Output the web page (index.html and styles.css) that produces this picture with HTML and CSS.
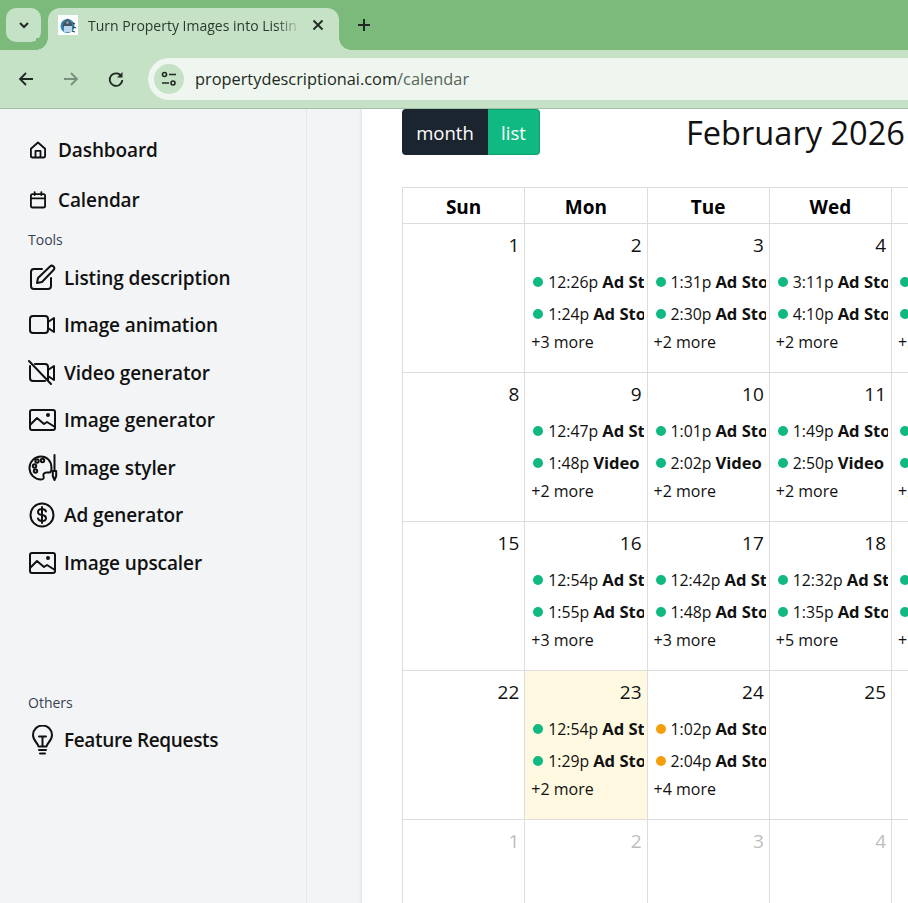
FILE: index.html
```html
<!DOCTYPE html>
<html lang="en">
<head>
<meta charset="utf-8">
<title>Calendar</title>
<link rel="stylesheet" href="styles.css">
</head>
<body>
<header class="chrome">
  <div class="tabstrip">
    <button class="tabmenu"><svg width="14" height="14" viewBox="0 0 14 14"><path d="M3 5l4 4 4-4" fill="none" stroke="#1f2a22" stroke-width="2"/></svg></button>
    <div class="tab">
      <svg class="favicon" width="20" height="20" viewBox="0 0 20 20"><rect width="20" height="20" fill="#fff"/><circle cx="9.500" cy="11" r="7" fill="#2f83ad"/><path d="M5 9l4.500-5.500L14 9v3H5z" fill="#46505e"/><rect x="6" y="11" width="8" height="6" fill="#b9d7ea"/><circle cx="9.500" cy="7.500" r="1.500" fill="#8a97a5"/><path d="M15 8l2 1M15 12l3 1M14 16l3 1" stroke="#27384a" stroke-width="1.200"/></svg>
      <span class="tabtitle">Turn Property Images into Listin</span>
      <svg class="tabx" width="12" height="12" viewBox="0 0 12 12"><path d="M1.500 1.500l9 9M10.500 1.500l-9 9" stroke="#1f2a22" stroke-width="1.800"/></svg>
    </div>
    <svg class="newtab" width="14" height="14" viewBox="0 0 14 14"><path d="M7 1v12M1 7h12" stroke="#1f2a22" stroke-width="2"/></svg>
  </div>
  <div class="toolbar">
    <svg class="navicon" width="18" height="18" viewBox="0 0 18 18"><path d="M16 9H3M9 3L3 9l6 6" fill="none" stroke="#1f2a22" stroke-width="1.800"/></svg>
    <svg class="navicon" width="18" height="18" viewBox="0 0 18 18"><path d="M2 9h13M9 3l6 6-6 6" fill="none" stroke="#76907b" stroke-width="1.800"/></svg>
    <svg class="navicon" width="18" height="18" viewBox="0 0 18 18"><path d="M14.500 6.500A6.300 6.300 0 1 0 15.300 10" fill="none" stroke="#1f2a22" stroke-width="1.800"/><path d="M15.500 2v5.500H10z" fill="#1f2a22"/></svg>
    <div class="omnibox">
      <span class="sitebtn"><svg width="18" height="18" viewBox="0 0 18 18"><circle cx="4.500" cy="4.500" r="2" fill="none" stroke="#1f2a22" stroke-width="1.600"/><path d="M9 4.500h7M2 13h7" stroke="#1f2a22" stroke-width="1.600"/><circle cx="13" cy="13" r="2" fill="none" stroke="#1f2a22" stroke-width="1.600"/></svg></span>
      <span class="url">propertydescriptionai.com<span class="urlpath">/calendar</span></span>
    </div>
  </div>
</header>
<div class="page">
  <aside class="sidebar">
    <a class="nav small-ic"><svg width="20" height="20" viewBox="0 0 24 24" class="ic heavy"><path d="M3.500 10.500L12 3l8.500 7.500V19a2 2 0 0 1-2 2h-13a2 2 0 0 1-2-2zM9 21v-8h6v8"/></svg>Dashboard</a>
    <a class="nav small-ic cal"><svg width="20" height="20" viewBox="0 0 24 24" class="ic heavy"><rect x="3.500" y="5" width="17" height="16" rx="2"/><path d="M3.500 10h17M8 2.500V6M16 2.500V6"/></svg>Calendar</a>
    <div class="label tools">Tools</div>
    <a class="nav big"><svg width="28" height="28" viewBox="0 0 28 28" class="ic"><path d="M23 14v8a3 3 0 0 1-3 3H6a3 3 0 0 1-3-3V8a3 3 0 0 1 3-3h8"/><path d="M10 14L22 2.500a2.200 2.200 0 0 1 3.500 3.500L14 18l-5 1z"/></svg>Listing description</a>
    <a class="nav big"><svg width="28" height="28" viewBox="0 0 28 28" class="ic"><rect x="2" y="5" width="18" height="17" rx="3"/><path d="M20 11l6-4v14l-6-4"/></svg>Image animation</a>
    <a class="nav big"><svg width="28" height="28" viewBox="0 0 28 28" class="ic"><path d="M7 5h10a3 3 0 0 1 3 3v14M17 22H5a3 3 0 0 1-3-3V7M20 11l6-4v14l-6-4M1 2l22 23"/></svg>Video generator</a>
    <a class="nav big"><svg width="28" height="28" viewBox="0 0 28 28" class="ic"><rect x="2" y="4" width="25" height="20" rx="2"/><path d="M2 19l7-7 7 6 3-2 8 5"/><circle cx="20" cy="9" r="1"/></svg>Image generator</a>
    <a class="nav big tight"><svg width="30" height="28" viewBox="0 0 30 28" class="ic"><path d="M13 2.500A11.500 11.500 0 1 0 13 25.500c3 0 3-2 2.500-3.500s.5-3.500 3-3.500h2.500c2 0 2.500-2 2.500-4.500C23.500 7 19 2.500 13 2.500z"/><circle cx="6.500" cy="12" r="1.700"/><circle cx="9" cy="7" r="1.700"/><circle cx="14.500" cy="6.500" r="1.700"/><circle cx="7.500" cy="17" r="1.700"/><path d="M26.500 1v16M24.800 17h3.400v5l-1.700 4-1.700-4z"/></svg>Image styler</a>
    <a class="nav big"><svg width="28" height="28" viewBox="0 0 28 28" class="ic"><circle cx="14" cy="14" r="11.500"/><path d="M18 10.500c-.5-1.500-2-2.500-4-2.500-2.500 0-4 1.300-4 3s1.500 2.700 4 3 4 1.300 4 3-1.500 3-4 3c-2 0-3.500-1-4-2.500M14 6v16"/></svg>Ad generator</a>
    <a class="nav big"><svg width="28" height="28" viewBox="0 0 28 28" class="ic"><rect x="2" y="4" width="25" height="20" rx="2"/><path d="M2 19l7-7 7 6 3-2 8 5"/><circle cx="20" cy="9" r="1"/></svg>Image upscaler</a>
    <div class="label others">Others</div>
    <a class="nav big requests"><svg width="28" height="30" viewBox="0 0 28 30" class="ic"><path d="M10.500 21.500c0-3-5.500-5.500-5.500-11.500a9.500 9.500 0 0 1 19 0c0 6-5.500 8.500-5.500 11.500zM11 11.500h7M14.500 11.500v10M11 25h7M12 28.500h5"/></svg>Feature Requests</a>
  </aside>
  <div class="gutter"></div>
  <main class="content">
    <div class="cal-head">
      <div class="btns"><button class="btn month">month</button><button class="btn list">list</button></div>
      <h2 class="cal-title">February 2026</h2>
    </div>
    <div class="grid">
      <div class="dow">Sun</div><div class="dow">Mon</div><div class="dow">Tue</div><div class="dow">Wed</div><div class="dow"></div>
      <div class="cell"><div class="num">1</div></div>
      <div class="cell"><div class="num">2</div><div class="ev"><i class="dot"></i>12:26p <b>Ad Story</b></div><div class="ev"><i class="dot"></i>1:24p <b>Ad Story</b></div><div class="more">+3 more</div></div>
      <div class="cell"><div class="num">3</div><div class="ev"><i class="dot"></i>1:31p <b>Ad Story</b></div><div class="ev"><i class="dot"></i>2:30p <b>Ad Story</b></div><div class="more">+2 more</div></div>
      <div class="cell"><div class="num">4</div><div class="ev"><i class="dot"></i>3:11p <b>Ad Story</b></div><div class="ev"><i class="dot"></i>4:10p <b>Ad Story</b></div><div class="more">+2 more</div></div>
      <div class="cell"><div class="num">5</div><div class="ev"><i class="dot"></i>3:11p <b>Ad Story</b></div><div class="ev"><i class="dot"></i>4:10p <b>Ad Story</b></div><div class="more">+2 more</div></div>

      <div class="cell"><div class="num">8</div></div>
      <div class="cell"><div class="num">9</div><div class="ev"><i class="dot"></i>12:47p <b>Ad Story</b></div><div class="ev"><i class="dot"></i>1:48p <b>Video</b></div><div class="more">+2 more</div></div>
      <div class="cell"><div class="num">10</div><div class="ev"><i class="dot"></i>1:01p <b>Ad Story</b></div><div class="ev"><i class="dot"></i>2:02p <b>Video</b></div><div class="more">+2 more</div></div>
      <div class="cell"><div class="num">11</div><div class="ev"><i class="dot"></i>1:49p <b>Ad Story</b></div><div class="ev"><i class="dot"></i>2:50p <b>Video</b></div><div class="more">+2 more</div></div>
      <div class="cell"><div class="num">12</div><div class="ev"><i class="dot"></i>1:49p <b>Ad Story</b></div><div class="ev"><i class="dot"></i>2:50p <b>Video</b></div><div class="more">+2 more</div></div>

      <div class="cell"><div class="num">15</div></div>
      <div class="cell"><div class="num">16</div><div class="ev"><i class="dot"></i>12:54p <b>Ad Story</b></div><div class="ev"><i class="dot"></i>1:55p <b>Ad Story</b></div><div class="more">+3 more</div></div>
      <div class="cell"><div class="num">17</div><div class="ev"><i class="dot"></i>12:42p <b>Ad Story</b></div><div class="ev"><i class="dot"></i>1:48p <b>Ad Story</b></div><div class="more">+3 more</div></div>
      <div class="cell"><div class="num">18</div><div class="ev"><i class="dot"></i>12:32p <b>Ad Story</b></div><div class="ev"><i class="dot"></i>1:35p <b>Ad Story</b></div><div class="more">+5 more</div></div>
      <div class="cell"><div class="num">19</div><div class="ev"><i class="dot"></i>12:32p <b>Ad Story</b></div><div class="ev"><i class="dot"></i>1:35p <b>Ad Story</b></div><div class="more">+5 more</div></div>

      <div class="cell"><div class="num">22</div></div>
      <div class="cell today"><div class="num">23</div><div class="ev"><i class="dot"></i>12:54p <b>Ad Story</b></div><div class="ev"><i class="dot"></i>1:29p <b>Ad Story</b></div><div class="more">+2 more</div></div>
      <div class="cell"><div class="num">24</div><div class="ev"><i class="dot amber"></i>1:02p <b>Ad Story</b></div><div class="ev"><i class="dot amber"></i>2:04p <b>Ad Story</b></div><div class="more">+4 more</div></div>
      <div class="cell"><div class="num">25</div></div>
      <div class="cell"><div class="num">26</div></div>

      <div class="cell off"><div class="num">1</div></div>
      <div class="cell off"><div class="num">2</div></div>
      <div class="cell off"><div class="num">3</div></div>
      <div class="cell off"><div class="num">4</div></div>
      <div class="cell off"><div class="num">5</div></div>
    </div>
  </main>
</div>
</body>
</html>
```

FILE: styles.css
```css
* { box-sizing: border-box; }
html, body { margin: 0; height: 100%; overflow: hidden; }
body { font-family: "Open Sans", "Noto Sans", sans-serif; color: #111; background: #fff; }

.chrome { height: 109px; background: #c5e1c6; border-bottom: 1px solid #a3bfa5; }
.tabstrip { height: 50px; background: #7cba7c; display: flex; align-items: flex-start; padding: 8px 0 0 6px; position: relative; }
.tabmenu { width: 35px; height: 34px; border: 0; border-radius: 10px; background: #c5e1c6; display: flex; align-items: center; justify-content: center; padding: 0; }
.tab { width: 291px; height: 42px; margin-left: 7px; background: #c5e1c6; border-radius: 12px 12px 0 0; display: flex; align-items: center; padding: 0 14px 8px 10px; position: relative; }
.tab::before, .tab::after { content: ""; position: absolute; bottom: 0; width: 12px; height: 12px; background: radial-gradient(circle at 0 0, #7cba7c 11.500px, #c5e1c6 12px); }
.tab::before { left: -12px; }
.tab::after { right: -12px; transform: scaleX(-1); }
.favicon { flex: none; }
.tabtitle { font-size: 14px; color: #2b3a2e; width: 213px; margin-left: 10px; white-space: nowrap; overflow: hidden; -webkit-mask-image: linear-gradient(to right, #000 88%, transparent); mask-image: linear-gradient(to right, #000 88%, transparent); }
.tabx { margin-left: 11px; flex: none; }
.newtab { margin: 10px 0 0 18px; }

.toolbar { height: 58px; display: flex; align-items: center; padding: 0 0 1px 17px; gap: 27px; background: #c5e1c6; }
.omnibox { flex: 1; height: 42px; margin-left: -4px; background: #eff6ef; border-radius: 21px 0 0 21px; display: flex; align-items: center; padding-left: 6px; }
.sitebtn { width: 30px; height: 30px; border-radius: 50%; background: #c5e1c6; display: flex; align-items: center; justify-content: center; }
.url { margin-left: 11px; font-size: 16.350px; color: #1c2a20; }
.urlpath { color: #566459; }

.page { display: flex; height: 794px; overflow: hidden; }
.sidebar { width: 307px; flex: none; background: #f3f4f6; border-right: 1px solid #e5e7eb; padding: 28px 0 0 28px; }
.gutter { width: 55px; flex: none; background: #f3f4f6; box-shadow: inset -4px 0 3px -3px #dfe1e4; }
.nav { display: flex; align-items: center; color: #111; font-weight: 600; font-size: 19px; letter-spacing: -0.1px; white-space: nowrap; }
.small-ic { height: 26px; gap: 10px; }
.cal { margin-top: 24px; }
.big { height: 28px; margin-top: 19.500px; gap: 8px; }
.tight { gap: 6px; }
.requests { letter-spacing: -0.350px; }
.label { font-size: 14px; color: #374151; line-height: 20px; }
.tools { margin-top: 17px; margin-bottom: -6px; }
.others { margin-top: 116px; margin-bottom: -6px; }
.ic { flex: none; fill: none; stroke: #111; stroke-width: 2; stroke-linecap: round; stroke-linejoin: round; }
.heavy { stroke-width: 2.200; }

.content { flex: 1; min-width: 0; padding: 0 0 0 40px; background: #fff; overflow: hidden; }
.cal-head { display: flex; justify-content: space-between; align-items: flex-start; height: 78px; width: 503px; }
.btns { display: flex; }
.btn { height: 46px; border: 0; color: #fff; font-family: inherit; font-size: 18.500px; padding: 0; }
.month { width: 86px; background: #1b2530; border-radius: 4px 0 0 4px; }
.list { width: 52px; background: #10b981; border: 1px solid #0e9f6e; border-left: 0; border-radius: 0 4px 4px 0; }
.cal-title { margin: 0; font-size: 32.600px; font-weight: 400; line-height: 48px; white-space: nowrap; }

.grid { display: grid; grid-template-columns: repeat(5, 122.250px); grid-template-rows: 36px; grid-auto-rows: 149px; border-top: 1px solid #ddd; border-left: 1px solid #ddd; width: 612px; }
.dow { border-right: 1px solid #ddd; border-bottom: 1px solid #ddd; text-align: center; font-weight: 700; font-size: 19px; line-height: 38px; color: #000; }
.cell { border-right: 1px solid #ddd; border-bottom: 1px solid #ddd; padding: 0 3px 0 7px; overflow: hidden; min-width: 0; }
.num { text-align: right; font-size: 19px; line-height: 24px; margin: 9px 0 13px 0; padding-right: 2px; color: #111; }
.ev { font-size: 15.800px; line-height: 24px; height: 24px; margin-bottom: 8px; white-space: nowrap; overflow: hidden; display: flex; align-items: center; }
.ev b { font-weight: 700; font-size: 16.600px; margin-left: 4px; }
.dot { width: 10px; height: 10px; border-radius: 50%; background: #10b981; flex: none; margin: 0 5px 0 1px; }
.amber { background: #f59e0b; }
.more { font-size: 16px; line-height: 24px; margin-top: -4px; margin-left: -1px; }
.today { background: #fef9e0; }
.off .num { color: #bdbdbd; }
```
